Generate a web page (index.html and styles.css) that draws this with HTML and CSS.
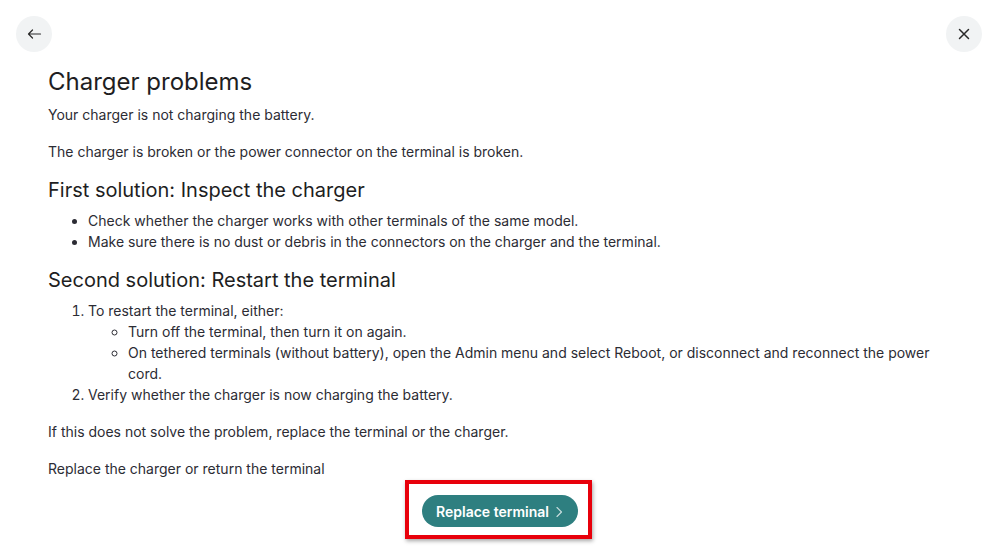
FILE: index.html
```html
<!DOCTYPE html>
<html lang="en">
<head>
<meta charset="utf-8">
<title>Charger problems</title>
<link rel="stylesheet" href="styles.css">
</head>
<body>
<div class="topbar">
  <button class="round-btn" aria-label="Back">
    <svg width="16" height="16" viewBox="0 0 16 16"><path d="M14.5 8H2.5M6.5 4L2.5 8L6.5 12" fill="none" stroke="#2a2a2a" stroke-width="1.2" stroke-linecap="round" stroke-linejoin="round"/></svg>
  </button>
  <button class="round-btn" aria-label="Close">
    <svg width="16" height="16" viewBox="0 0 16 16"><path d="M3.5 3.5L12.5 12.5M12.5 3.5L3.5 12.5" fill="none" stroke="#2a2a2a" stroke-width="1.5" stroke-linecap="round"/></svg>
  </button>
</div>
<main class="content">
  <h1 class="title">Charger problems</h1>
  <p class="text">Your charger is not charging the battery.</p>
  <p class="text">The charger is broken or the power connector on the terminal is broken.</p>
  <h2 class="subtitle">First solution: Inspect the charger</h2>
  <ul class="list">
    <li>Check whether the charger works with other terminals of the same model.</li>
    <li>Make sure there is no dust or debris in the connectors on the charger and the terminal.</li>
  </ul>
  <h2 class="subtitle">Second solution: Restart the terminal</h2>
  <ol class="list">
    <li>To restart the terminal, either:
      <ul class="sublist">
        <li>Turn off the terminal, then turn it on again.</li>
        <li>On tethered terminals (without battery), open the Admin menu and select Reboot, or disconnect and reconnect the power cord.</li>
      </ul>
    </li>
    <li>Verify whether the charger is now charging the battery.</li>
  </ol>
  <p class="text">If this does not solve the problem, replace the terminal or the charger.</p>
  <p class="text">Replace the charger or return the terminal</p>
  <div class="action-row">
    <div class="highlight">
      <button class="primary-btn">Replace terminal
        <svg class="chev" width="8" height="12" viewBox="0 0 8 12"><path d="M2 1.5L6.5 6L2 10.5" fill="none" stroke="#c9dede" stroke-width="1.1" stroke-linecap="round" stroke-linejoin="round"/></svg>
      </button>
    </div>
  </div>
</main>
</body>
</html>
```
FILE: styles.css
```css
* { box-sizing: border-box; }
html, body { margin: 0; padding: 0; background: #ffffff; }
body {
  font-family: Inter, "Noto Sans", "Liberation Sans", sans-serif;
  color: #2c2c34;
  font-size: 14px;
  line-height: 21px;
  width: 997px;
  height: 558px;
  overflow: hidden;
}
.topbar {
  display: flex;
  justify-content: space-between;
  padding: 16px 15px 0 16px;
}
.round-btn {
  width: 36px;
  height: 36px;
  border-radius: 50%;
  border: none;
  background: #f1f3f4;
  display: flex;
  align-items: center;
  justify-content: center;
  padding: 0;
}
.content {
  padding: 0 48px;
}
.title {
  font-size: 24px;
  font-weight: 400;
  line-height: 28px;
  color: #1e1e22;
  margin: 16px 0 8px;
}
.text {
  margin: 0 0 16px;
}
.subtitle {
  font-size: 20px;
  font-weight: 400;
  line-height: 24px;
  color: #1e1e22;
  margin: 0 0 8px;
}
.list {
  margin: 0 0 16px;
  padding-left: 40px;
}
.sublist {
  list-style-type: circle;
  margin: 0;
  padding-left: 40px;
}
.action-row {
  display: flex;
  justify-content: center;
  margin-top: -15px;
}
.highlight {
  border: 4px solid #e8000b;
  padding: 11px 10px 8px 13px;
  box-shadow: 1px 2px 4px rgba(0,0,0,0.35);
}
.primary-btn {
  display: flex;
  align-items: center;
  gap: 6px;
  height: 32px;
  padding: 0 15px 0 14px;
  border: none;
  border-radius: 16px;
  background: #2e7f80;
  color: #ffffff;
  font-family: Inter, "Noto Sans", "Liberation Sans", sans-serif;
  font-size: 14px;
  font-weight: 600;
}
.chev { margin-top: 1px; }
```
